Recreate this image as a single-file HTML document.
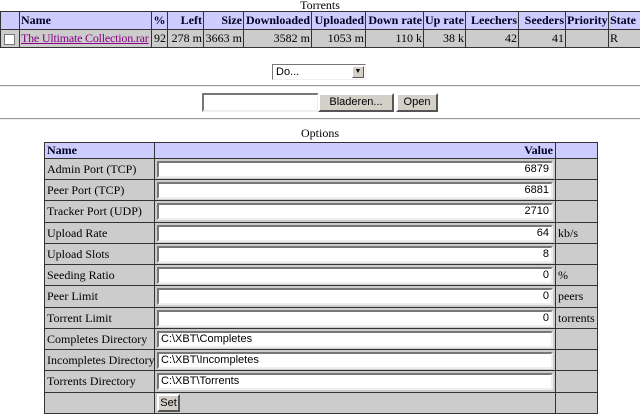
<!DOCTYPE html>
<html><head><style>
*{box-sizing:border-box}
body{margin:0;width:640px;height:414px;overflow:hidden;background:#fff;font-family:"Liberation Serif",serif;font-size:12px;color:#000;position:relative}
.a{position:absolute}
table{border-collapse:collapse;table-layout:fixed;position:absolute}
td,th{border:1px solid #333;padding:0 2px;white-space:nowrap;overflow:hidden;font-size:12px}
.t1 td,.t1 th{padding:0 1px}
th{background:#ccf;color:#002;font-weight:bold}
td{background:#ccc}
.r{text-align:right}
.l{text-align:left}
.inp{display:block;background:#fff;border:2px solid;border-color:#777 #eee #eee #777;height:17px;font-family:"Liberation Sans",sans-serif;font-size:11px;line-height:13px;padding:0 2px}
.btn{position:absolute;background:#d4d0c8;border:2px solid;border-color:#fff #555 #555 #fff;font-family:"Liberation Sans",sans-serif;font-size:11px;text-align:center;line-height:15px}
.hr{position:absolute;left:0;width:640px;height:2px;border-top:1px solid #999;border-bottom:1px solid #eee}
</style></head><body>
<div class="a" style="left:0;width:640px;top:-2px;text-align:center">Torrents</div>
<table class="t1" style="left:0;top:11px;width:640px">
<colgroup><col style="width:19px"><col style="width:132px"><col style="width:16px"><col style="width:36px"><col style="width:40px"><col style="width:68px"><col style="width:54px"><col style="width:58px"><col style="width:42px"><col style="width:53px"><col style="width:47px"><col style="width:43px"><col style="width:32px"></colgroup>
<tr style="height:18px"><th></th><th class="l">Name</th><th>%</th><th class="r">Left</th><th class="r">Size</th><th class="r">Downloaded</th><th class="r">Uploaded</th><th class="r">Down rate</th><th class="r">Up rate</th><th class="r">Leechers</th><th class="r">Seeders</th><th class="r">Priority</th><th class="l">State</th></tr>
<tr style="height:18px"><td><span style="display:inline-block;width:11px;height:11px;background:#fff;border:1px solid #777;vertical-align:middle;margin-left:2px"></span></td><td><a style="color:#808;text-decoration:underline;letter-spacing:-0.2px">The Ultimate Collection.rar</a></td><td class="r">92</td><td class="r">278 m</td><td class="r">3663 m</td><td class="r">3582 m</td><td class="r">1053 m</td><td class="r">110 k</td><td class="r">38 k</td><td class="r">42</td><td class="r">41</td><td></td><td>R</td></tr>
</table>
<div class="a" style="left:272px;top:64px;width:94px;height:16px;border:1px solid;border-color:#777 #eee #eee #777;background:#fff;font-family:'Liberation Sans',sans-serif;font-size:11px;padding-left:3px;line-height:14px">Do...<span style="position:absolute;right:1px;top:1px;width:12px;height:12px;background:#d4d0c8;border:1px solid;border-color:#fff #555 #555 #fff;font-size:7px;text-align:center;line-height:10px">▼</span></div>
<div class="hr" style="top:85px"></div>
<div class="a" style="left:202px;top:93px;width:117px;height:19px;border:2px solid;border-color:#777 #eee #eee #777;background:#fff"></div>
<div class="btn" style="left:318px;top:93px;width:76px;height:19px">Bladeren...</div>
<div class="btn" style="left:396px;top:93px;width:42px;height:19px">Open</div>
<div class="hr" style="top:118px"></div>
<div class="a" style="left:0;width:640px;top:126px;text-align:center">Options</div>
<table style="left:44px;top:142px;width:553px">
<colgroup><col style="width:110px"><col style="width:401px"><col style="width:42px"></colgroup>
<tr style="height:16px"><th class="l">Name</th><th class="r">Value</th><th></th></tr>
<tr style="height:21px"><td>Admin Port (TCP)</td><td><span class="inp r">6879</span></td><td></td></tr>
<tr style="height:21px"><td>Peer Port (TCP)</td><td><span class="inp r">6881</span></td><td></td></tr>
<tr style="height:22px"><td>Tracker Port (UDP)</td><td><span class="inp r">2710</span></td><td></td></tr>
<tr style="height:21px"><td>Upload Rate</td><td><span class="inp r">64</span></td><td>kb/s</td></tr>
<tr style="height:21px"><td>Upload Slots</td><td><span class="inp r">8</span></td><td></td></tr>
<tr style="height:21px"><td>Seeding Ratio</td><td><span class="inp r">0</span></td><td>%</td></tr>
<tr style="height:22px"><td>Peer Limit</td><td><span class="inp r">0</span></td><td>peers</td></tr>
<tr style="height:21px"><td>Torrent Limit</td><td><span class="inp r">0</span></td><td>torrents</td></tr>
<tr style="height:21px"><td>Completes Directory</td><td><span class="inp">C:\XBT\Completes</span></td><td></td></tr>
<tr style="height:21px"><td>Incompletes Directory</td><td><span class="inp">C:\XBT\Incompletes</span></td><td></td></tr>
<tr style="height:22px"><td>Torrents Directory</td><td><span class="inp">C:\XBT\Torrents</span></td><td></td></tr>
<tr style="height:21px"><td></td><td style="position:relative"><span class="btn" style="position:relative;display:inline-block;width:23px;height:18px">Set</span></td><td></td></tr>
</table>
</body></html>
